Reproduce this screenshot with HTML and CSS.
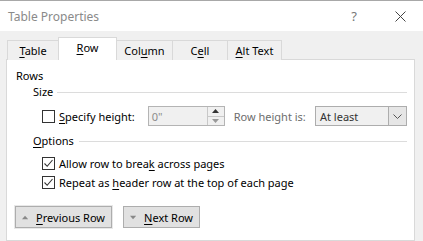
FILE: index.html
```html
<!DOCTYPE html>
<html lang="en">
<head>
    <meta charset="UTF-8">
    <title>Table Properties</title>
    <link rel="stylesheet" href="styles.css">
</head>
<body>
    <div class="titlebar">
        <span class="title">Table Properties</span>
        <span class="help">?</span>
        <span class="close">
            <svg width="11" height="11" viewBox="0 0 11 11"><path d="M0.5 0.5L10.5 10.5M10.5 0.5L0.5 10.5" stroke="#444" stroke-width="1" fill="none"/></svg>
        </span>
    </div>

    <div class="tabs">
        <div class="tab tab-table"><u>T</u>able</div>
        <div class="tab tab-row active"><u>R</u>ow</div>
        <div class="tab tab-column">Col<u>u</u>mn</div>
        <div class="tab tab-cell">C<u>e</u>ll</div>
        <div class="tab tab-alt"><u>A</u>lt Text</div>
    </div>

    <div class="panel">
        <div class="group-title">Rows</div>

        <div class="section-head">
            <span>Size</span>
            <span class="rule"></span>
        </div>

        <div class="size-row">
            <label class="check">
                <span class="box"></span>
                <span><u>S</u>pecify height:</span>
            </label>
            <div class="spin-input">
                <span class="value">0"</span>
                <span class="spinner">
                    <span class="spin-btn"><svg width="7" height="4" viewBox="0 0 7 4"><path d="M0 4L3.5 0L7 4Z" fill="#333"/></svg></span>
                    <span class="spin-btn"><svg width="7" height="4" viewBox="0 0 7 4"><path d="M0 0L3.5 4L7 0Z" fill="#999"/></svg></span>
                </span>
            </div>
            <span class="muted-label">Row height is:</span>
            <div class="select">
                <span class="value">At least</span>
                <span class="drop">
                    <svg width="9" height="5" viewBox="0 0 9 5"><path d="M0.5 0.5L4.5 4.5L8.5 0.5" stroke="#555" fill="none"/></svg>
                </span>
            </div>
        </div>

        <div class="section-head options-head">
            <span><u>O</u>ptions</span>
            <span class="rule"></span>
        </div>

        <div class="check-list">
            <label class="check check-row">
                <span class="box checked">
                    <svg width="11" height="11" viewBox="0 0 11 11"><path d="M1.5 5.5L4.2 8.3L9.5 2" stroke="#333" stroke-width="1.1" fill="none"/></svg>
                </span>
                <span>Allow row to brea<u>k</u> across pages</span>
            </label>
            <label class="check check-row">
                <span class="box checked">
                    <svg width="11" height="11" viewBox="0 0 11 11"><path d="M1.5 5.5L4.2 8.3L9.5 2" stroke="#333" stroke-width="1.1" fill="none"/></svg>
                </span>
                <span>Repeat as <u>h</u>eader row at the top of each page</span>
            </label>
        </div>

        <div class="buttons">
            <button class="nav-button prev">
                <svg width="9" height="5" viewBox="0 0 9 5"><path d="M0 5L4.5 0L9 5Z" fill="#888"/></svg>
                <span><u>P</u>revious Row</span>
            </button>
            <button class="nav-button next">
                <svg width="9" height="5" viewBox="0 0 9 5"><path d="M0 0L4.5 5L9 0Z" fill="#888"/></svg>
                <span><u>N</u>ext Row</span>
            </button>
        </div>
    </div>
</body>
</html>
```

FILE: styles.css
```css
body, html {
    margin: 0;
    padding: 0;
    height: 100%;
    overflow: hidden;
}
body {
    background: #f0f0f0;
    font-family: "Noto Sans", "Open Sans", sans-serif;
    font-size: 11px;
    color: #000;
    white-space: nowrap;
}
u {
    text-decoration-thickness: 1px;
    text-underline-offset: 2px;
}
.titlebar {
    height: 31px;
    background: #fff;
    border-top: 1px solid #a8a8a8;
    display: flex;
    align-items: center;
    padding-left: 8px;
    box-sizing: border-box;
    font-size: 12px;
}
.title {
    color: #8a8a8a;
    flex: 1;
}
.help {
    color: #777;
    font-size: 13px;
    width: 46px;
    text-align: center;
}
.close {
    width: 46px;
    display: flex;
    justify-content: center;
}
.tabs {
    display: flex;
    align-items: flex-end;
    height: 29px;
    padding-left: 7px;
    margin-bottom: -1px;
    position: relative;
    z-index: 1;
}
.tab {
    height: 19px;
    line-height: 20px;
    border: 1px solid #d9d9d9;
    border-bottom: none;
    background: #f0f0f0;
    text-align: center;
    margin-left: -1px;
}
.tab-table { width: 50px; margin-left: 0; }
.tab-row { width: 57px; }
.tab-column { width: 55px; }
.tab-cell { width: 54px; }
.tab-alt { width: 53px; }
.tab.active {
    background: #fff;
    height: 22px;
    line-height: 19px;
}
.panel {
    margin-left: 6px;
    width: 409px;
    height: 182px;
    background: #fff;
    border: 1px solid #d9d9d9;
    padding: 8px 7px 0 9px;
    box-sizing: border-box;
}
.group-title {
    line-height: 16px;
}
.section-head {
    display: flex;
    align-items: center;
    line-height: 16px;
    padding-left: 17px;
}
.section-head .rule {
    flex: 1;
    height: 1px;
    background: #dcdcdc;
    margin-left: 4px;
}
.options-head {
    margin-top: 7px;
}
.options-head .rule {
    margin-left: 5px;
}
.size-row {
    display: flex;
    align-items: center;
    height: 20px;
    margin-top: 6px;
    padding-left: 26px;
}
.check {
    display: flex;
    align-items: center;
    gap: 4px;
}
.box {
    width: 11px;
    height: 11px;
    border: 1px solid #333;
    background: #fff;
    display: flex;
    align-items: center;
    justify-content: center;
    flex-shrink: 0;
}
.check-list {
    margin-top: 5px;
}
.check-row {
    height: 19px;
    padding-left: 26px;
}
.spin-input {
    width: 77px;
    height: 20px;
    box-sizing: border-box;
    margin-left: 13px;
    border: 1px solid #b4b4b4;
    background: #f0f0f0;
    display: flex;
    align-items: center;
    flex-shrink: 0;
}
.spin-input .value {
    flex: 1;
    color: #8c8c8c;
    padding-left: 3px;
}
.spinner {
    width: 16px;
    height: 18px;
    display: flex;
    flex-direction: column;
    border-left: 1px solid #c8c8c8;
    background: #f0f0f0;
}
.spin-btn {
    flex: 1;
    display: flex;
    align-items: center;
    justify-content: center;
}
.spin-btn + .spin-btn {
    border-top: 1px solid #c8c8c8;
}
.muted-label {
    color: #6d6d6d;
    margin-left: 9px;
}
.select {
    width: 92px;
    height: 20px;
    box-sizing: border-box;
    margin-left: auto;
    border: 1px solid #adadad;
    background: #f0f0f0;
    display: flex;
    align-items: center;
    flex-shrink: 0;
}
.select .value {
    flex: 1;
    padding-left: 4px;
    color: #333;
}
.drop {
    width: 17px;
    height: 18px;
    border-left: 1px solid #adadad;
    background: #e6e6e6;
    display: flex;
    align-items: center;
    justify-content: center;
}
.buttons {
    display: flex;
    gap: 11px;
    margin-top: 14px;
    margin-left: -1px;
}
.nav-button {
    height: 22px;
    border: 1px solid #adadad;
    background: #e1e1e1;
    font-family: inherit;
    font-size: 11px;
    color: #000;
    display: flex;
    align-items: center;
    gap: 8px;
    padding: 0 6px;
    margin: 0;
    white-space: nowrap;
}
.nav-button.prev {
    width: 97px;
    box-shadow: 0 0 0 1px #e8e8e8;
}
.nav-button.next {
    width: 77px;
}
```
